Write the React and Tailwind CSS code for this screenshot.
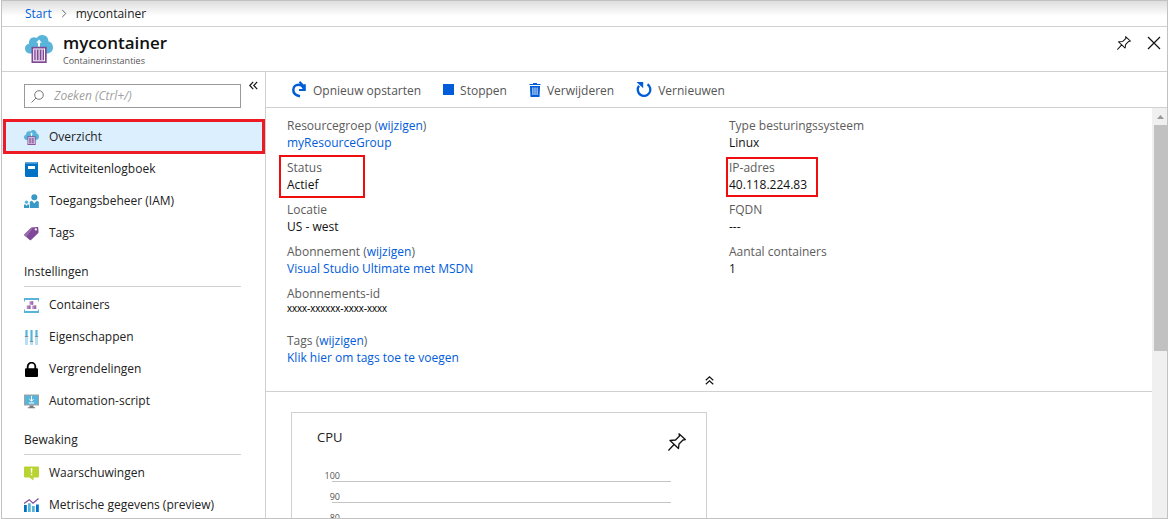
import React from 'react';

function ContainerIcon({ className }) {
  return (
    <svg viewBox="0 0 28 28" className={className} aria-hidden="true">
      <path
        d="M5.5 18.5C2.5 18.5 0 16.4 0 13.4 0 10.700 1.800 9 4 8.700 3.600 5 6 2.200 9 2.200c1 0 1.900.3 2.700.8C13 1 15 0 17.200 0c3.800 0 6.300 2.800 6.300 6.500C26.300 6.900 28 9.500 28 12.600c0 3.200-2.200 5.700-5.500 5.900z"
        fill="#59b4d9"
      />
      <path d="M14 4.500l2.800 3.300h-1.800v4h-2v-4h-1.800z" fill="#fff" />
      <path d="M6.500 11.800h15.200v16.200H6.500z" fill="#804998" />
      <path d="M8.200 13.500h11.800v12.800H8.200z" fill="#fff" />
      <path d="M9.200 14.500h9.800v10.800H9.200z" fill="#804998" />
      <path d="M11.200 14.500v10.800M14.100 14.500v10.800M17 14.500v10.800" stroke="#fff" strokeWidth="1" />
    </svg>
  );
}

function PinIcon({ className }) {
  return (
    <svg viewBox="0 0 18 18" className={className} fill="none" stroke="#111" strokeWidth="1.300" strokeLinejoin="round" aria-hidden="true">
      <path d="M2 7.500L7.500 7l4-4L11 .8l6.300 5.700L15 7l-4 4-.5 4.500zM6 11.500L.4 17.500" />
    </svg>
  );
}

function BookIcon() {
  return (
    <svg viewBox="0 0 15 15" className="size-[15px]" aria-hidden="true">
      <path d="M2 0h12v15H2a1.500 1.500 0 0 1-1-1.500v-12A1.500 1.500 0 0 1 2 0z" fill="#0072c6" />
      <path d="M1.500.4h12v1H1.500z" fill="#a5cbea" />
      <path d="M4 4h7v3H4z" fill="#fff" />
    </svg>
  );
}

function PeopleIcon() {
  return (
    <svg viewBox="0 0 16 16" className="size-[15px]" aria-hidden="true">
      <circle cx="11" cy="3.500" r="3.200" fill="#3999c6" />
      <path d="M6.200 8.200L8.500 7.200 11 10l2.500-2.800 2.300 1V15H6.200z" fill="#3999c6" />
      <circle cx="2.700" cy="8.700" r="1.800" fill="#59b4d9" />
      <path d="M0 11.500l1.300-.5 1.400 1.500L4.100 11l1.300.5V15H0z" fill="#3999c6" />
    </svg>
  );
}

function TagIcon() {
  return (
    <svg viewBox="0 0 16 16" className="size-[15px]" aria-hidden="true">
      <path d="M8.500 1.500L14 1c.7 0 1.200.4 1.200 1l.3 4.500c0 .5-.2.900-.5 1.200L7.500 15c-.5.400-1 .3-1.400-.1L.5 10c-.4-.4-.4-.9 0-1.300L7.300 2c.3-.3.700-.5 1.200-.5z" fill="#804998" />
      <path d="M8.500 1.500L10 1.400 2.500 11.700.5 10c-.4-.4-.4-.9 0-1.300L7.300 2c.3-.3.700-.5 1.200-.5z" fill="#9a6cae" />
      <circle cx="12.600" cy="3.700" r="1.200" fill="#fff" />
    </svg>
  );
}

function ContainersIcon() {
  return (
    <svg viewBox="0 0 15 15" className="size-[15px]" aria-hidden="true">
      <path d="M0 0h15v3.500h-1V2H1v1.500H0zM0 15h15v-3.500h-1V13H1v-1.500H0z" fill="#59b4d9" />
      <path d="M5.500 3.300h3.700v3.500H5.500zM2.700 7.500h3.800v3.500H2.700zM8.300 7.500h3.900v3.500H8.300z" fill="#b58cc6" />
      <path d="M7.400 3.300h1.800v3.500H7.400zM4.700 7.500h1.800v3.500H4.700zM10.300 7.500h1.900v3.500h-1.900z" fill="#9a6cae" />
    </svg>
  );
}

function SlidersIcon() {
  return (
    <svg viewBox="0 0 15 15" className="size-[15px]" aria-hidden="true">
      <path d="M1 0h3v15H1zM6 0h3v15H6zM11 0h3v15h-3z" fill="#b9e0f2" />
      <path d="M1.700 0h1.600v6H1.700zM6.700 0h1.600v11H6.700zM11.700 0h1.600v6h-1.600z" fill="#59b4d9" />
      <path d="M.8 6h3.400v1H.8zM5.800 11h3.400v1H5.800zM10.800 6h3.400v1h-3.400z" fill="#8a8a8a" />
    </svg>
  );
}

function LockIcon() {
  return (
    <svg viewBox="0 0 15 15" className="size-[15px]" aria-hidden="true">
      <path d="M3.700 7V4.500a3.800 3.800 0 0 1 7.600 0V7" fill="none" stroke="#000" strokeWidth="1.800" />
      <rect x="1" y="6.300" width="13" height="8.700" rx="1" />
    </svg>
  );
}

function MonitorIcon() {
  return (
    <svg viewBox="0 0 15 15" className="size-[15px]" aria-hidden="true">
      <path d="M0 .5h15v11H0z" fill="#a0a1a2" />
      <path d="M1 1.500h13v9H1z" fill="#59b4d9" />
      <path d="M5.500 11.500h4v1.700h1.700V14.200H3.800v-1h1.700z" fill="#7a7a7a" />
      <path d="M7.500 2v5M5.300 5l2.200 2.200L9.700 5M4.800 9h5.400" stroke="#fff" strokeWidth="1" fill="none" />
    </svg>
  );
}

function AlertIcon() {
  return (
    <svg viewBox="0 0 15 15" className="size-[15px]" aria-hidden="true">
      <path d="M1 .5h13a1 1 0 0 1 1 1v9a1 1 0 0 1-1 1H9.500v3l-4-3H1a1 1 0 0 1-1-1v-9a1 1 0 0 1 1-1z" fill="#b8d432" />
      <path d="M6.700 2.300h1.700l-.3 4.500H7zM6.800 7.700h1.500v1.500H6.800z" fill="#fff" />
    </svg>
  );
}

function MetricsIcon() {
  return (
    <svg viewBox="0 0 16 16" className="size-[15px]" aria-hidden="true">
      <path d="M0 7.500h3V15H0zM12.800 7h3v8h-3z" fill="#0072c6" />
      <path d="M4.200 5.500h3V15h-3zM8.500 8.500h3V15h-3z" fill="#59b4d9" />
      <path d="M0 5.800L5.600 1.800l4 3.700L15.500.5" stroke="#804998" strokeWidth="1.200" fill="none" />
    </svg>
  );
}

function RestartIcon() {
  return (
    <svg viewBox="0 0 16 17" className="h-[17px] w-4" aria-hidden="true">
      <path d="M9 15.300C5 14.500 2.300 12.500 2.300 9c0-3.200 2.300-5.300 5.200-5.300 2.500 0 4.500 1.500 5.500 4.300" fill="none" stroke="#015cda" strokeWidth="2.500" />
      <path d="M8 9h5.800V3.300M8.500.8L14 6.500" fill="none" stroke="#015cda" strokeWidth="2" />
    </svg>
  );
}

function TrashIcon() {
  return (
    <svg viewBox="0 0 12 14" className="h-[14px] w-3" aria-hidden="true">
      <path d="M4 1V0h4v1h3.500v1H.5V1z" fill="#015cda" />
      <path d="M1 3h10v1l-.5 10h-9L1 4z" fill="#015cda" />
      <path d="M3.900 4.500v7.500M6 4.500v7.500M8.100 4.500v7.500" stroke="#fff" strokeWidth=".9" />
    </svg>
  );
}

function RefreshIcon() {
  return (
    <svg viewBox="0 0 16 17" className="h-[17px] w-4" aria-hidden="true">
      <path d="M11.500 3.300A6.300 6.300 0 1 1 3 4.800" fill="none" stroke="#015cda" strokeWidth="2.300" />
      <path d="M.5 1h6.700v6.300z" fill="#015cda" />
    </svg>
  );
}

function NavItem({ icon, label, active }) {
  return (
    <li className="relative">
      <a href="#" className={`flex h-8 items-center gap-[10px] pt-0.5 pl-[22px] text-[#222] ${active ? 'bg-[#dbeffe]' : ''}`}>
        {icon}
        {label}
      </a>
      {active && <span className="pointer-events-none absolute -inset-y-px right-0 left-px -mb-px border-3 border-[#ed1c24]" />}
    </li>
  );
}

function NavHeading({ children }) {
  return (
    <h2 className="mr-6 mb-px ml-[22px] flex h-[39px] items-center border-b border-[#d0d0d0] pt-[10px] text-[12px] font-medium text-[#222]">
      {children}
    </h2>
  );
}

function ToolButton({ icon, children }) {
  return (
    <button type="button" className="flex items-center gap-[6px] whitespace-nowrap text-[#555]">
      {icon}
      <span className="pt-0.5">{children}</span>
    </button>
  );
}

function Field({ label, edit, tall, boxed, children }) {
  return (
    <div className={`relative leading-[17px] ${tall ? 'h-[39px]' : 'h-[34px]'}`}>
      <dt className="text-[#5c5c5c]">
        {label}
        {edit && (
          <>
            {' ('}
            <a href="#" className="text-[#015cda]">wijzigen</a>)
          </>
        )}
      </dt>
      <dd className="text-[#111]">{children}</dd>
      {boxed && <span className={`pointer-events-none absolute border-2 border-[#f00d0d] ${boxed}`} />}
    </div>
  );
}

const ticks = [100, 90, 80];

export default function App() {
  return (
    <div className="h-screen overflow-hidden bg-white pl-px font-['Open_Sans','Noto_Sans',sans-serif] text-[12px] text-[#222]">
      <div className="flex h-full flex-col border border-[#c2c2c2]">
        <nav className="flex h-[26px] shrink-0 items-center border-b border-[#d0d0d0] bg-linear-to-b from-[#dedede] to-white to-60% pl-[23px]">
          <a href="#" className="text-[#015cda]">Start</a>
          <svg viewBox="0 0 6 10" className="mx-[9px] h-[9px] w-[6px]" fill="none" stroke="#555" aria-hidden="true">
            <path d="M1 1l4 4-4 4" />
          </svg>
          <span>mycontainer</span>
        </nav>

        <header className="flex h-[45px] shrink-0 items-center border-b border-[#d0d0d0] pr-[6px] pl-[23px]">
          <ContainerIcon className="size-7" />
          <div className="ml-[10px]">
            <h1 className="text-[17px] leading-[22px] font-semibold text-[#111]">mycontainer</h1>
            <p className="pt-px text-[9px] leading-[12px] text-[#555]">Containerinstanties</p>
          </div>
          <div className="ml-auto flex items-center gap-4 pb-3">
            <button type="button" aria-label="Vastmaken">
              <PinIcon className="size-[14px]" />
            </button>
            <button type="button" aria-label="Sluiten">
              <svg viewBox="0 0 14 14" className="size-[14px]" stroke="#111" strokeWidth="1.200" aria-hidden="true">
                <path d="M1 1l12 12M13 1L1 13" />
              </svg>
            </button>
          </div>
        </header>

        <div className="flex min-h-0 flex-1">
          <aside className="w-[264px] shrink-0 overflow-hidden border-r border-[#d0d0d0]">
            <div className="mb-3 flex items-start pt-3 pl-[22px]">
              <label className="flex h-6 w-[217px] items-center border border-[#999] pl-[6px]">
                <svg viewBox="0 0 13 13" className="size-[13px]" fill="none" stroke="#777" aria-hidden="true">
                  <circle cx="8" cy="5" r="4.300" />
                  <path d="M5 8L.5 12.500" />
                </svg>
                <input
                  type="text"
                  aria-label="Zoeken"
                  placeholder="Zoeken (Ctrl+/)"
                  className="ml-[10px] min-w-0 flex-1 text-[12px] italic outline-none placeholder:text-[#a0a0a0]"
                />
              </label>
              <button type="button" aria-label="Menu samenvouwen" className="ml-2 -mt-[3px]">
                <svg viewBox="0 0 9 9" className="size-[9px]" fill="none" stroke="#111" strokeWidth="1.200" aria-hidden="true">
                  <path d="M4.200.8L.8 4.500l3.400 3.700M8.200.8L4.800 4.500l3.400 3.700" />
                </svg>
              </button>
            </div>
            <ul>
              <NavItem active icon={<ContainerIcon className="size-[15px]" />} label="Overzicht" />
              <NavItem icon={<BookIcon />} label="Activiteitenlogboek" />
              <NavItem icon={<PeopleIcon />} label="Toegangsbeheer (IAM)" />
              <NavItem icon={<TagIcon />} label="Tags" />
            </ul>
            <NavHeading>Instellingen</NavHeading>
            <ul>
              <NavItem icon={<ContainersIcon />} label="Containers" />
              <NavItem icon={<SlidersIcon />} label="Eigenschappen" />
              <NavItem icon={<LockIcon />} label="Vergrendelingen" />
              <NavItem icon={<MonitorIcon />} label="Automation-script" />
            </ul>
            <NavHeading>Bewaking</NavHeading>
            <ul>
              <NavItem icon={<AlertIcon />} label="Waarschuwingen" />
              <NavItem icon={<MetricsIcon />} label="Metrische gegevens (preview)" />
            </ul>
          </aside>

          <main className="flex min-w-0 flex-1 flex-col">
            <div className="flex h-9 shrink-0 items-center gap-[22px] border-b border-[#d0d0d0] pl-[25px]">
              <ToolButton icon={<RestartIcon />}>Opnieuw opstarten</ToolButton>
              <ToolButton icon={<span className="size-[11px] bg-[#015cda]" />}>Stoppen</ToolButton>
              <ToolButton icon={<TrashIcon />}>Verwijderen</ToolButton>
              <ToolButton icon={<RefreshIcon />}>Vernieuwen</ToolButton>
            </div>

            <div className="flex min-h-0 flex-1">
              <div className="min-w-0 flex-1 overflow-hidden">
                <section className="border-b border-[#d0d0d0] pt-[9px] pb-[6px]">
                  <dl className="grid grid-cols-2">
                    <div className="flex flex-col gap-2 pl-[21px]">
                      <Field label="Resourcegroep" edit>
                        <a href="#" className="text-[#015cda]">myResourceGroup</a>
                      </Field>
                      <Field label="Status" boxed="-top-1 -left-2 h-[43px] w-[86px]">Actief</Field>
                      <Field label="Locatie">US - west</Field>
                      <Field label="Abonnement" edit>
                        <a href="#" className="text-[#015cda]">Visual Studio Ultimate met MSDN</a>
                      </Field>
                      <Field label="Abonnements-id" tall>
                        <span className="block font-['Liberation_Sans',sans-serif] text-[10px] leading-[14px] text-black">xxxx-xxxxxx-xxxx-xxxx</span>
                      </Field>
                      <Field label="Tags" edit>
                        <a href="#" className="text-[#015cda]">Klik hier om tags toe te voegen</a>
                      </Field>
                    </div>
                    <div className="flex flex-col gap-2 pl-5">
                      <Field label="Type besturingssysteem">Linux</Field>
                      <Field label="IP-adres" boxed="-top-[2px] -left-[3px] h-10 w-[92px]">40.118.224.83</Field>
                      <Field label="FQDN">---</Field>
                      <Field label="Aantal containers">1</Field>
                    </div>
                  </dl>
                  <button type="button" aria-label="Samenvouwen" className="mx-auto mt-[10px] block">
                    <svg viewBox="0 0 9 9" className="size-[9px]" fill="none" stroke="#111" strokeWidth="1.200" aria-hidden="true">
                      <path d="M.8 4.200L4.500.8l3.700 3.400M.8 8.200l3.700-3.400 3.700 3.400" />
                    </svg>
                  </button>
                </section>

                <section className="mt-5 ml-[25px] w-[416px] max-w-full border border-[#d0d0d0] pt-[14px] pl-[25px]">
                  <div className="flex items-start justify-between pr-5">
                    <h3 className="text-[13px] leading-[20px]">CPU</h3>
                    <button type="button" aria-label="CPU vastmaken" className="mt-[6px]">
                      <PinIcon className="size-[18px]" />
                    </button>
                  </div>
                  <svg viewBox="0 0 354 130" className="mt-[13px] h-[130px] w-[354px]" aria-hidden="true">
                    {ticks.map((t, i) => (
                      <g key={t}>
                        <path d={`M15 ${17.5 + i * 21}H354`} stroke="#c4c4c4" />
                        <text x="23" y={15 + i * 21} textAnchor="end" fontSize="9" fill="#555">{t}</text>
                      </g>
                    ))}
                  </svg>
                </section>
              </div>

              <div className="w-[15px] shrink-0 bg-[#f0f0f0]" aria-hidden="true">
                <svg viewBox="0 0 15 17" className="h-[17px] w-[15px]">
                  <path d="M5 11l3.500-4 3.500 4z" fill="#999" />
                </svg>
                <div className="ml-[2px] h-[55%] bg-[#c1c1c1]" />
              </div>
            </div>
          </main>
        </div>
      </div>
    </div>
  );
}
